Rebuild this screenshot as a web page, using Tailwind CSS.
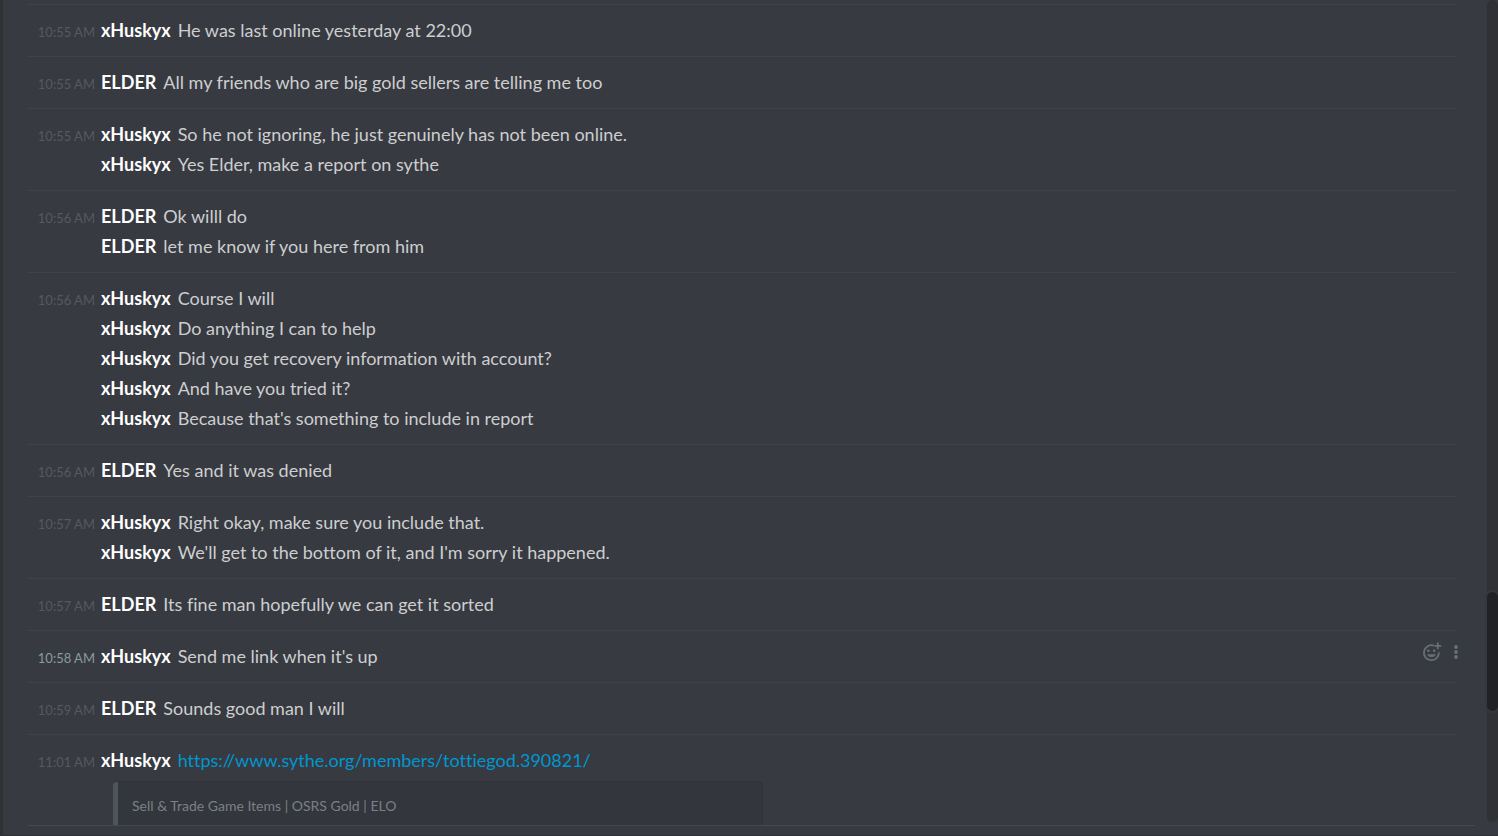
<!DOCTYPE html>
<html lang="en">
<head>
  <meta charset="UTF-8">
  <title>Chat</title>
  <script src="https://cdn.jsdelivr.net/npm/@tailwindcss/browser@4"></script>
</head>
<body class="bg-[#373a41] font-['Lato','Liberation_Sans',sans-serif] text-white">
  <div class="flex flex-col h-screen overflow-hidden border-l-3 border-b border-[#303135] [font-variant-ligatures:none]">
    <main class="flex flex-1 min-h-0">
      <div class="flex-1 min-w-0 flex flex-col pl-[25px] pr-3">
        <div id="messages" class="flex-1 min-h-0 overflow-hidden pt-1 pr-[18px] text-lg/[30px]"></div>
      </div>
      <!-- scrollbar -->
      <div class="relative w-[11px] mb-[3px] rounded-full bg-[#303135]">
        <div class="absolute inset-x-0 top-[72%] h-[14.5%] rounded-full bg-[#202225] ring-2 ring-[#36373c]"></div>
      </div>
    </main>
    <footer class="h-[10px] ml-[25px] mr-[23px] border-t border-[#45484d]"></footer>
  </div>

  <script>
    const groups = [
      { time: '10:55 AM', name: 'xHuskyx', lines: ['He was last online yesterday at 22:00'] },
      { time: '10:55 AM', name: 'ELDER', lines: ['All my friends who are big gold sellers are telling me too'] },
      { time: '10:55 AM', name: 'xHuskyx', lines: ['So he not ignoring, he just genuinely has not been online.', 'Yes Elder, make a report on sythe'] },
      { time: '10:56 AM', name: 'ELDER', lines: ['Ok willl do', 'let me know if you here from him'] },
      { time: '10:56 AM', name: 'xHuskyx', lines: ['Course I will', 'Do anything I can to help', 'Did you get recovery information with account?', 'And have you tried it?', "Because that's something to include in report"] },
      { time: '10:56 AM', name: 'ELDER', lines: ['Yes and it was denied'] },
      { time: '10:57 AM', name: 'xHuskyx', lines: ['Right okay, make sure you include that.', "We'll get to the bottom of it, and I'm sorry it happened."] },
      { time: '10:57 AM', name: 'ELDER', lines: ['Its fine man hopefully we can get it sorted'] },
      { time: '10:58 AM', name: 'xHuskyx', lines: ["Send me link when it's up"], active: true },
      { time: '10:59 AM', name: 'ELDER', lines: ['Sounds good man I will'] },
      { time: '11:01 AM', name: 'xHuskyx', link: 'https://www.sythe.org/members/tottiegod.390821/', lines: [''], embed: 'Sell & Trade Game Items | OSRS Gold | ELO' },
    ];

    const actions = `
      <div class="absolute -right-px top-[11px] flex items-center gap-3 text-[#666f76]">
        <button type="button" aria-label="Add reaction" class="block">
          <svg class="block w-5 h-5" viewBox="0 0 20 20" fill="none" stroke="currentColor" stroke-width="1.8">
            <path d="M11.8 3.600A7.500 7.500 0 1 0 16.900 10.400"/>
            <path d="M15.800 .5v6.800M12.400 3.900h6.800"/>
            <circle cx="6.400" cy="8.800" r="1.300" fill="currentColor" stroke="none"/>
            <circle cx="12.200" cy="8.800" r="1.300" fill="currentColor" stroke="none"/>
            <path d="M5.200 12.200h8.600a4.500 4 0 0 1-8.600 0z" fill="currentColor" stroke="none"/>
          </svg>
        </button>
        <button type="button" aria-label="More" class="block">
          <svg class="block w-1 h-4" viewBox="0 0 4 16" fill="currentColor">
            <circle cx="2" cy="3" r="1.900"/><circle cx="2" cy="8" r="1.900"/><circle cx="2" cy="13" r="1.900"/>
          </svg>
        </button>
      </div>`;

    document.getElementById('messages').innerHTML = groups.map(g => `
      <section class="relative border-t border-[#3f4248] pt-[10px] pb-[11px]">
        ${g.lines.map((line, i) => `
          <div class="flex items-baseline h-[30px]">
            <time class="w-[67px] mr-[6px] shrink-0 text-right text-[13px]/[24px] ${g.active ? 'text-[#8b9a9f]' : 'text-[#56595e]'}">${i ? '' : g.time}</time>
            <strong class="mr-[7px] font-bold">${g.name}</strong>
            ${g.link
              ? `<a href="${g.link}" class="text-[#0096cf]">${g.link}</a>`
              : `<p class="text-[#cdcecf]">${line}</p>`}
          </div>`).join('')}
        ${g.active ? actions : ''}
        ${g.embed ? `
          <div class="ml-[85px] mt-[6px] max-w-[650px] h-24 flex rounded border border-l-0 border-[#313338] bg-[#33363c] overflow-hidden">
            <div class="w-[5px] bg-[#4f545c]"></div>
            <div class="px-[14px] pt-[9px] text-sm/[30px] text-[#7c8085]">${g.embed.replace('&', '&amp;')}</div>
          </div>` : ''}
      </section>`).join('');
  </script>
</body>
</html>
